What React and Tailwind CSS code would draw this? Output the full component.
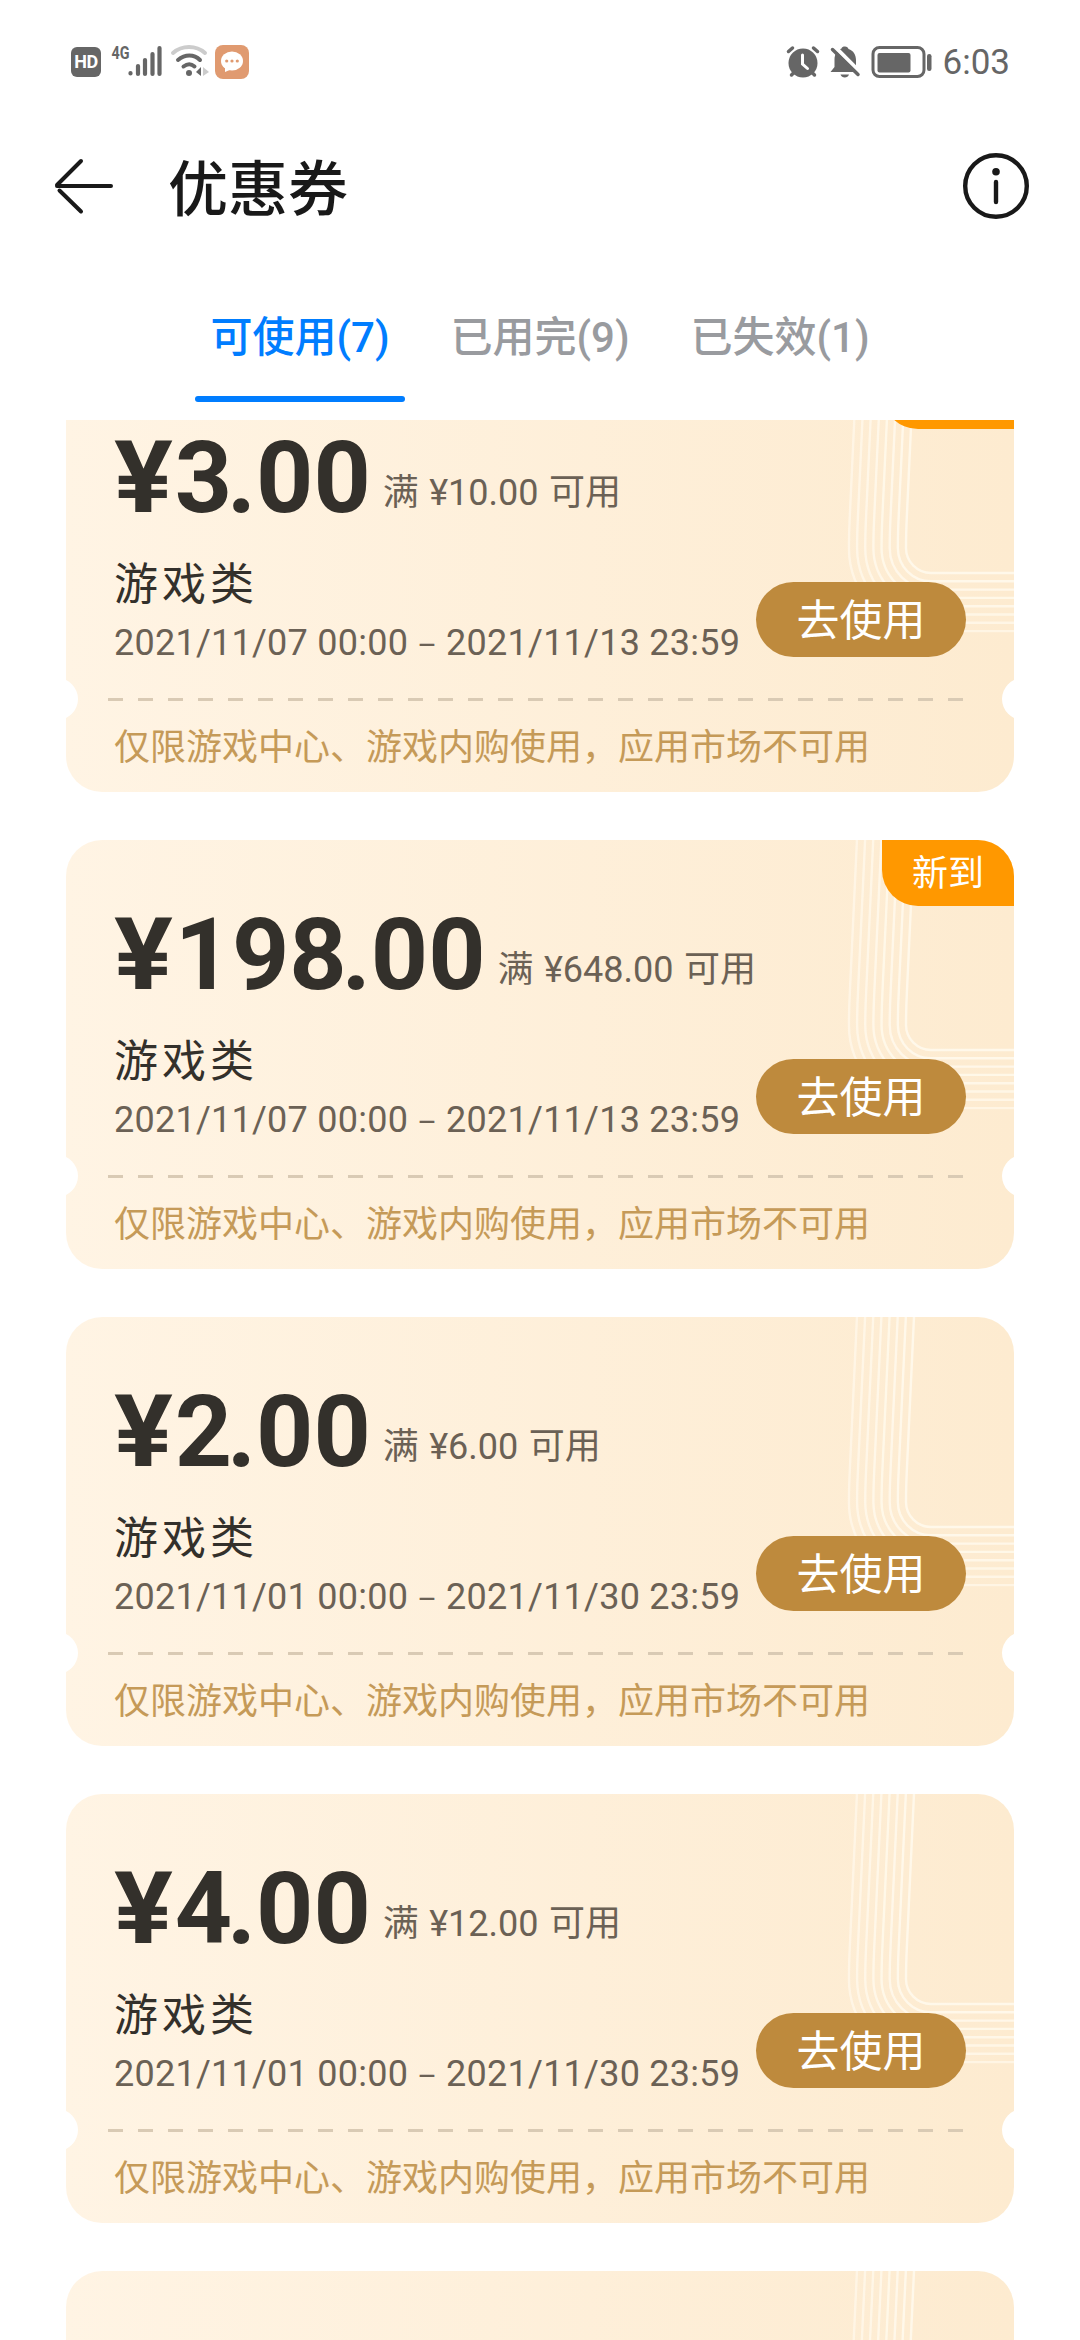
const coupons = [
  { amount: "3", min: "10.00", from: "2021/11/07 00:00", to: "2021/11/13 23:59", isNew: true },
  { amount: "198", min: "648.00", from: "2021/11/07 00:00", to: "2021/11/13 23:59", isNew: true },
  { amount: "2", min: "6.00", from: "2021/11/01 00:00", to: "2021/11/30 23:59" },
  { amount: "4", min: "12.00", from: "2021/11/01 00:00", to: "2021/11/30 23:59" },
];

const tabs = [
  { label: "可使用", count: 7, active: true },
  { label: "已用完", count: 9 },
  { label: "已失效", count: 1 },
];

function StatusBar() {
  return (
    <div className="flex h-[120px] shrink-0 items-center pl-[71px] pr-[70px] text-[#666666]">
      <div className="mt-1 flex h-[30px] w-[30px] items-center justify-center rounded-[6px] bg-[#666666] text-[18px] font-bold leading-[30px] tracking-[-0.5px] text-white">
        HD
      </div>
      <svg className="ml-[10px] mt-1 overflow-visible" width="52" height="36" viewBox="111 44 52 36" fill="currentColor">
        <text x="111.500" y="59" fontSize="18" fontWeight="700" textLength="18" lengthAdjust="spacingAndGlyphs" fontFamily="Roboto, sans-serif">4G</text>
        <g stroke="currentColor" strokeWidth="4.200" strokeLinecap="round">
          <path d="M130.500 73v.5M138 66v8M145 60v14M152.500 54v20M159.500 48v26" />
        </g>
      </svg>
      <svg className="ml-[6px] mt-1" width="40" height="36" viewBox="169 44 40 36" fill="none" strokeLinecap="round" strokeWidth="4">
        <path d="M173 53c9-8 23-8 32 0" stroke="#cccccc" />
        <path d="M178 60c7-6 16-6 22 0M183.500 66.500c4-3 7.500-3 11 0" stroke="#666666" />
        <circle cx="189" cy="73" r="3" fill="#666666" />
        <path d="M196 72l5-5v9z" fill="#666666" />
        <path d="M203 67l6 5-6 4z" fill="#cccccc" />
      </svg>
      <svg className="ml-[6px] mt-1" width="34" height="34" viewBox="0 0 34 34">
        <rect width="34" height="34" rx="8" fill="#e09a70" />
        <ellipse cx="17" cy="16" rx="11" ry="9.500" fill="#ffffff" />
        <path d="M10 20v7l7-3z" fill="#ffffff" />
        <g fill="#e09a70">
          <circle cx="11.700" cy="16" r="1.600" />
          <circle cx="17" cy="16" r="1.600" />
          <circle cx="22.300" cy="16" r="1.600" />
        </g>
      </svg>
      <svg className="ml-auto mt-1" width="36" height="36" viewBox="785 43 36 36" fill="none" stroke="currentColor" strokeLinecap="round">
        <circle cx="803" cy="62" r="14.500" fill="currentColor" stroke="none" />
        <path d="M788.500 50.500l4-3.500M817.500 50.500l-4-3.500M791.500 74l3-3M814.500 74l-3-3" strokeWidth="3.500" />
        <path d="M802.500 54v9l5 4.500" stroke="#ffffff" strokeWidth="3" />
      </svg>
      <svg className="ml-[8px] mt-1" width="32" height="36" viewBox="829 43 32 36">
        <path d="M845 45.500c2 0 3 1 3.500 2.500 5 1.500 7.500 6 7.500 11v7.500l2.500 4.500h-28l4-5v-7c0-6 2.500-10 7-11.500.5-1.500 1.500-2 3.500-2z" fill="currentColor" />
        <path d="M840.500 73.500h8.500c-1 4-7.500 4-8.500 0z" fill="currentColor" />
        <path d="M834 45l26.500 26.500" stroke="#ffffff" strokeWidth="4" />
        <path d="M832.500 48.500l25.500 25" stroke="currentColor" strokeWidth="3.500" strokeLinecap="round" />
      </svg>
      <svg className="ml-[9px] mt-1" width="64" height="36" viewBox="870 43 64 36">
        <rect x="873" y="46.500" width="51" height="29" rx="6.500" fill="none" stroke="currentColor" strokeWidth="3" />
        <rect x="877.500" y="52" width="33" height="19.500" rx="2" fill="currentColor" />
        <rect x="927" y="53" width="4.500" height="17" rx="2.200" fill="currentColor" />
      </svg>
      <span className="ml-[9px] mt-[6px] text-[35px] leading-[42px]">6:03</span>
    </div>
  );
}

function Header() {
  return (
    <div className="flex h-[132px] shrink-0 items-center pl-[52px] pr-[50px] text-[#191919]">
      <svg width="64" height="60" viewBox="52 156 64 60" fill="none" stroke="currentColor" strokeWidth="4" strokeLinecap="round">
        <path d="M57 186h54M57 185l24-24M59.500 190.500l21.500 21" />
      </svg>
      <h1 className="ml-[52px] mt-[10px] text-[60px] font-medium leading-[90px]">优惠券</h1>
      <svg className="ml-auto" width="68" height="68" viewBox="0 0 68 68" fill="none" stroke="currentColor">
        <circle cx="34" cy="34" r="30.800" strokeWidth="4.400" />
        <circle cx="34" cy="19.700" r="3.800" fill="currentColor" stroke="none" />
        <path d="M34 30v20" strokeWidth="4.400" strokeLinecap="round" />
      </svg>
    </div>
  );
}

function Tabs() {
  return (
    <div className="flex h-[168px] shrink-0 justify-center gap-[30px]">
      {tabs.map((t) => (
        <div key={t.label} className="flex w-[210px] flex-col items-center pt-[56px]">
          <span
            className={
              t.active
                ? "whitespace-nowrap text-[42px] font-medium leading-[60px] text-[#007dff]"
                : "whitespace-nowrap text-[42px] font-medium leading-[60px] text-[#999b9f]"
            }
          >
            {t.label}({t.count})
          </span>
          {t.active && <div className="mt-[28px] h-[6px] w-full rounded-full bg-[#007dff]" />}
        </div>
      ))}
    </div>
  );
}

function CornerLines() {
  return (
    <svg className="absolute right-0 top-0" width="178" height="280" viewBox="770 0 178 280" fill="none" stroke="#fff8ea" strokeWidth="2.400">
      {[0, 1, 2, 3, 4, 5, 6, 7].map((i) => {
        const x = 840 - 8.15 * i;
        const y = 210 + 8.3 * i;
        const r = 25 + 8.15 * i;
        const k = r * 0.45;
        return (
          <path
            key={i}
            opacity={1 - i * 0.03}
            d={`M${x + 8} 0L${x + 1} 150Q${x} 170 ${x} 185C${x} ${y - k} ${x + k} ${y} ${x + r} ${y}H948`}
          />
        );
      })}
    </svg>
  );
}

function CouponCard({ children }) {
  return (
    <div className="relative h-[429px] shrink-0 overflow-hidden rounded-[36px] bg-linear-to-r from-[#fff4e4] to-[#fdebd0]">
      <CornerLines />
      {children}
    </div>
  );
}

function Coupon({ c }) {
  return (
    <CouponCard>
      {c.isNew && (
        <div className="absolute right-0 top-0 flex h-[66px] w-[132px] items-center justify-center rounded-bl-[36px] bg-[#ff9800] pt-[2px] text-[36px] leading-[54px] text-white">
          新到
        </div>
      )}
      <div className="relative flex h-[335px] flex-col pl-12 pt-[61px]">
        <div className="flex h-[112px] items-baseline">
          <span className="whitespace-nowrap text-[100px] font-bold leading-[108px] text-[#33302b]">
            <span className="mr-[7px] inline-block origin-left scale-x-110">¥</span>
            <span className="-mr-[5px]">{c.amount}</span>
            <span>.00</span>
          </span>
          <span className="relative -top-[7px] ml-[12px] whitespace-nowrap text-[36px] leading-[54px] text-[#6b6155] [word-spacing:1.5px]">
            满 ¥{c.min} 可用
          </span>
        </div>
        <div className="mt-[18px] text-[44px] leading-[62px] tracking-[4px] text-[#33302b]">游戏类</div>
        <div className="flex h-[54px] items-center whitespace-nowrap text-[36px] leading-[54px] tracking-[0.250px] text-[#6b6155]">
          <span>{c.from}</span>
          <span className="mx-[9px] mt-[3px] text-[30px] leading-[42px]">–</span>
          <span>{c.to}</span>
        </div>
        <div className="absolute right-12 top-[219px] flex h-[75px] w-[210px] items-center justify-center rounded-full bg-[#be8a3d] pt-[3px] text-[43px] leading-[62px] text-white">
          去使用
        </div>
      </div>
      <div className="ml-[42px] h-[3px] w-[855px] bg-[repeating-linear-gradient(to_right,#d9cab4_0_15px,transparent_15px_30px)]" />
      <div className="absolute -left-[30px] top-[315px] h-[42px] w-[42px] rounded-full bg-white" />
      <div className="absolute -right-[30px] top-[315px] h-[42px] w-[42px] rounded-full bg-white" />
      <div className="pl-12 pt-[20px] text-[36px] leading-[54px] text-[#c59a58]">仅限游戏中心、游戏内购使用，应用市场不可用</div>
    </CouponCard>
  );
}

export default function App() {
  return (
    <div className="flex h-[2340px] w-[1080px] flex-col overflow-hidden bg-white font-[Roboto,'Noto_Sans_CJK_SC',sans-serif]" lang="zh-CN">
      <StatusBar />
      <Header />
      <Tabs />
      <div className="min-h-0 flex-1 overflow-hidden px-[66px]">
        <div className="-mt-[57px] flex flex-col gap-12">
          {coupons.map((c) => (
            <Coupon key={c.amount} c={c} />
          ))}
          <CouponCard />
        </div>
      </div>
    </div>
  );
}
